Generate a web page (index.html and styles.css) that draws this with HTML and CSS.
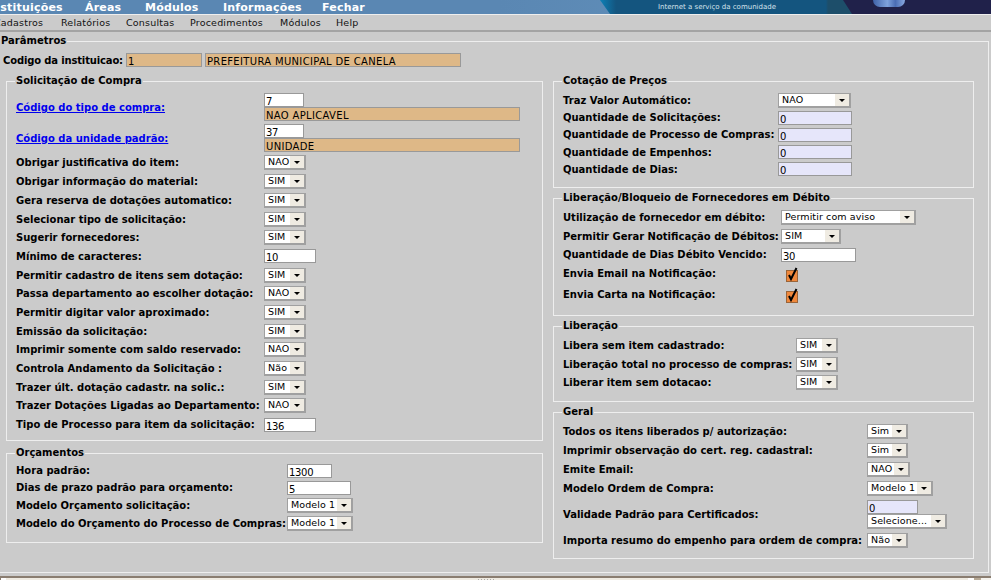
FILE: index.html
```html
<!DOCTYPE html>
<html lang="pt-BR">
<head>
<meta charset="UTF-8">
<title>Parâmetros</title>
<link rel="stylesheet" href="styles.css">
</head>
<body>

<div class="topbar">
    <div class="topmenu">
        <span>Instituições</span><span>Áreas</span><span>Módulos</span><span>Informações</span><span>Fechar</span>
    </div>
    <div class="banner">
        <div class="banner-tip"></div>
        <div class="banner-mid">
            <div class="banner-title">Prefeitura <em>On-line</em></div>
            <div class="banner-sub">Internet a serviço da comunidade</div>
        </div>
        <div class="banner-dark"><div class="banner-cube"></div></div>
    </div>
</div>
<div class="submenu">
    <span>Cadastros</span><span>Relatórios</span><span>Consultas</span><span>Procedimentos</span><span>Módulos</span><span>Help</span>
</div>

<fieldset class="main">
    <legend>Parâmetros</legend>
    <div class="inst">
        <span class="lbl">Codigo da instituicao:</span>
        <span class="inp ro num w76">1</span>
        <span class="inp ro w256">PREFEITURA MUNICIPAL DE CANELA</span>
    </div>

    <div class="cols">
        <div class="col-left">
            <fieldset class="box sol">
                <legend>Solicitação de Compra</legend>
                <div class="row tall"><a class="lbl link" href="#">Código do tipo de compra:</a><div class="stack"><span class="inp num w40">7</span><span class="inp ro w256">NAO APLICAVEL</span></div></div>
                <div class="row tall"><a class="lbl link" href="#">Código da unidade padrão:</a><div class="stack"><span class="inp num w40">37</span><span class="inp ro w256">UNIDADE</span></div></div>
                <div class="row"><span class="lbl">Obrigar justificativa do item:</span><span class="sel w42">NAO</span></div>
                <div class="row"><span class="lbl">Obrigar informação do material:</span><span class="sel w42">SIM</span></div>
                <div class="row"><span class="lbl">Gera reserva de dotações automatico:</span><span class="sel w42">SIM</span></div>
                <div class="row"><span class="lbl">Selecionar tipo de solicitação:</span><span class="sel w42">SIM</span></div>
                <div class="row"><span class="lbl">Sugerir fornecedores:</span><span class="sel w42">SIM</span></div>
                <div class="row"><span class="lbl">Mínimo de caracteres:</span><span class="inp num w52">10</span></div>
                <div class="row"><span class="lbl">Permitir cadastro de itens sem dotação:</span><span class="sel w42">SIM</span></div>
                <div class="row"><span class="lbl">Passa departamento ao escolher dotação:</span><span class="sel w42">NAO</span></div>
                <div class="row"><span class="lbl">Permitir digitar valor aproximado:</span><span class="sel w42">SIM</span></div>
                <div class="row"><span class="lbl">Emissão da solicitação:</span><span class="sel w42">SIM</span></div>
                <div class="row"><span class="lbl">Imprimir somente com saldo reservado:</span><span class="sel w42">NAO</span></div>
                <div class="row"><span class="lbl">Controla Andamento da Solicitação :</span><span class="sel w42">Não</span></div>
                <div class="row"><span class="lbl">Trazer últ. dotação cadastr. na solic.:</span><span class="sel w42">SIM</span></div>
                <div class="row"><span class="lbl">Trazer Dotações Ligadas ao Departamento:</span><span class="sel w42">NAO</span></div>
                <div class="row"><span class="lbl">Tipo de Processo para item da solicitação:</span><span class="inp num w52">136</span></div>
            </fieldset>

            <fieldset class="box orc">
                <legend>Orçamentos</legend>
                <div class="row r17"><span class="lbl">Hora padrão:</span><span class="inp num w45">1300</span></div>
                <div class="row r17"><span class="lbl">Dias de prazo padrão para orçamento:</span><span class="inp num w64">5</span></div>
                <div class="row r18"><span class="lbl">Modelo Orçamento solicitação:</span><span class="sel w66">Modelo 1</span></div>
                <div class="row r18"><span class="lbl">Modelo do Orçamento do Processo de Compras:</span><span class="sel w66">Modelo 1</span></div>
            </fieldset>
        </div>

        <div class="col-right">
            <fieldset class="box cot">
                <legend>Cotação de Preços</legend>
                <div class="row r17"><span class="lbl">Traz Valor Automático:</span><span class="sel w73">NAO</span></div>
                <div class="row r17"><span class="lbl">Quantidade de Solicitações:</span><span class="inp dis num w74">0</span></div>
                <div class="row r17"><span class="lbl">Quantidade de Processo de Compras:</span><span class="inp dis num w74">0</span></div>
                <div class="row r17"><span class="lbl">Quantidade de Empenhos:</span><span class="inp dis num w74">0</span></div>
                <div class="row r17"><span class="lbl">Quantidade de Dias:</span><span class="inp dis num w74">0</span></div>
            </fieldset>

            <fieldset class="box lib">
                <legend>Liberação/Bloqueio de Fornecedores em Débito</legend>
                <div class="row"><span class="lbl">Utilização de fornecedor em débito:</span><span class="sel w135">Permitir com aviso</span></div>
                <div class="row"><span class="lbl">Permitir Gerar Notificação de Débitos:</span><span class="sel w60">SIM</span></div>
                <div class="row"><span class="lbl">Quantidade de Dias Débito Vencido:</span><span class="inp num w75">30</span></div>
                <div class="row r19"><span class="lbl">Envia Email na Notificação:</span><svg class="chk" width="14" height="15" viewBox="0 0 14 15"><rect x="1.5" y="3.5" width="11" height="11" fill="#f0883c" stroke="#9a6438"/><path d="M4 8 L6 12 L11.5 1" fill="none" stroke="#000" stroke-width="2"/></svg></div>
                <div class="row r23"><span class="lbl">Envia Carta na Notificação:</span><svg class="chk" width="14" height="15" viewBox="0 0 14 15"><rect x="1.5" y="3.5" width="11" height="11" fill="#f0883c" stroke="#9a6438"/><path d="M4 8 L6 12 L11.5 1" fill="none" stroke="#000" stroke-width="2"/></svg></div>
            </fieldset>

            <fieldset class="box lib2">
                <legend>Liberação</legend>
                <div class="row"><span class="lbl">Libera sem item cadastrado:</span><span class="sel w42">SIM</span></div>
                <div class="row"><span class="lbl">Liberação total no processo de compras:</span><span class="sel w42">SIM</span></div>
                <div class="row"><span class="lbl">Liberar item sem dotacao:</span><span class="sel w42">SIM</span></div>
            </fieldset>

            <fieldset class="box ger">
                <legend>Geral</legend>
                <div class="row r19"><span class="lbl">Todos os itens liberados p/ autorização:</span><span class="sel w41">Sim</span></div>
                <div class="row r19"><span class="lbl">Imprimir observação do cert. reg. cadastral:</span><span class="sel w41">Sim</span></div>
                <div class="row r19"><span class="lbl">Emite Email:</span><span class="sel w43">NAO</span></div>
                <div class="row r19"><span class="lbl">Modelo Ordem de Compra:</span><span class="sel w66">Modelo 1</span></div>
                <div class="row r33"><span class="lbl">Validade Padrão para Certificados:</span><div class="stack"><span class="inp dis num w51">0</span><span class="sel w80">Selecione...</span></div></div>
                <div class="row r19"><span class="lbl">Importa resumo do empenho para ordem de compra:</span><span class="sel w41">Não</span></div>
            </fieldset>
        </div>
    </div>
</fieldset>

<div class="statusbar">
    <div class="status-left"></div>
    <div class="status-mid"><div class="status-dots"></div></div>
    <div class="status-gap"></div>
    <div class="status-thumb"></div>
    <div class="status-right"></div>
</div>

</body>
</html>
```

FILE: styles.css
```css
html, body {
    margin: 0;
    padding: 0;
    height: 580px;
    overflow: hidden;
}
body {
    background-color: #cbcbcb;
    font-family: "DejaVu Sans", Verdana, sans-serif;
    font-size: 10px;
    color: #000;
}

/* top menus */
.topbar {
    height: 14px;
    background-color: #5a87b3;
    position: relative;
    overflow: hidden;
    border-bottom: 1px solid #eee;
}
.topmenu {
    display: flex;
    margin-left: -12px;
    padding-top: 1px;
    font-weight: bold;
    font-size: 11px;
    letter-spacing: 0.2px;
    line-height: 14px;
    color: #fff;
}
.topmenu span:nth-child(1) { width: 97px; }
.topmenu span:nth-child(2) { width: 60px; }
.topmenu span:nth-child(3) { width: 78px; }
.topmenu span:nth-child(4) { width: 99px; }
.topmenu span:nth-child(5) { width: 60px; }
.banner {
    position: absolute;
    top: 0;
    right: 0;
    bottom: 0;
    left: 500px;
    display: flex;
    background: linear-gradient(to right, #5a87b3, #6a9ac2);
}
.banner-tip {
    width: 100px;
}
.banner-mid {
    width: 252px;
    background: linear-gradient(to right, #0e80b6 0, #14557f 16px, #14557f 226px, #1d4e6a 228px);
    clip-path: polygon(0 0, 243px 0, 252px 100%, 10px 100%);
    color: #d5e3ec;
    position: relative;
    z-index: 1;
}
.banner-title {
    position: absolute;
    left: 53px;
    top: -12px;
    font-size: 14px;
    font-weight: bold;
    line-height: 14px;
    color: #fff;
    white-space: nowrap;
}
.banner-title em {
    font-style: normal;
    color: #e6d84a;
}
.banner-sub {
    position: absolute;
    left: 58px;
    top: 3px;
    font-size: 7px;
    line-height: 8px;
    white-space: nowrap;
}
.banner-dark {
    flex: 1;
    background-color: #20214a;
    margin-left: -12px;
    position: relative;
}
.banner-cube {
    position: absolute;
    left: 33px;
    top: 0;
    width: 32px;
    height: 7px;
    border-radius: 0 0 8px 8px;
    background: linear-gradient(to right, #3f62a8, #7fa2dc 45%, #4a6cb4 70%, #8aaae0);
}

.submenu {
    height: 15px;
    border-bottom: 2px solid #a3a3a3;
    display: flex;
    margin-left: -6px;
    font-size: 9.5px;
    letter-spacing: 0.2px;
    line-height: 15px;
    color: #111;
}
.submenu span:nth-child(1) { width: 67px; }
.submenu span:nth-child(2) { width: 65px; }
.submenu span:nth-child(3) { width: 64px; }
.submenu span:nth-child(4) { width: 90px; }
.submenu span:nth-child(5) { width: 56px; }

/* fieldsets */
fieldset {
    margin: 0;
    padding: 0;
    border: 1px solid #eeeeee;
    min-width: 0;
}
legend {
    font-weight: bold;
    font-size: 10px;
    line-height: 14px;
    padding: 0 1px;
}
.main {
    margin: 2px 2px 0 0;
    height: 539px;
    box-sizing: border-box;
    border-left: 0;
}
.inst {
    display: flex;
    align-items: center;
    height: 14px;
    margin-top: 5px;
    padding-left: 3px;
}
.inst .lbl { width: 123px; letter-spacing: -0.15px; }
.inst .w76 { margin-right: 3px; }

.cols {
    display: flex;
    margin-top: 7px;
    padding-left: 6px;
}
.col-left { width: 537px; margin-right: 10px; }
.col-right { width: 421px; }

.box {
    box-sizing: border-box;
    padding-left: 9px;
}
.box legend { margin-left: -1px; }
.sol { height: 367px; padding-top: 4px; }
.orc { height: 97px; margin-top: 5px; padding-top: 2px; }
.cot { height: 114px; padding-top: 4px; }
.lib { height: 125px; margin-top: 3px; padding-top: 3px; }
.lib2 { height: 83px; margin-top: 3px; padding-top: 3px; }
.ger { height: 154px; margin-top: 3px; padding-top: 3px; }

.row {
    display: flex;
    align-items: center;
    height: 18.7px;
}
.row.tall { height: 30.8px; }
.row.r17 { height: 17.2px; }
.row.r18 { height: 18px; }
.row.r19 { height: 19px; }
.row.r23 { height: 23px; }
.row.r33 { height: 33px; }
.lbl {
    font-weight: bold;
    white-space: nowrap;
    flex-shrink: 0;
}
.link {
    color: #0000ee;
    text-decoration: underline;
}
.sol .lbl { width: 248px; }
.orc .lbl { width: 271px; }
.cot .lbl { width: 215px; }
.lib .lbl { width: 218px; }
.lib2 .lbl { width: 233px; }
.ger .lbl { width: 304px; }

.stack {
    display: flex;
    flex-direction: column;
}

/* form controls */
.inp {
    display: block;
    box-sizing: border-box;
    height: 14px;
    border: 1px solid #999;
    background-color: #fff;
    font-size: 10px;
    letter-spacing: 0.33px;
    line-height: 15px;
    padding-left: 1px;
    white-space: nowrap;
    overflow: hidden;
}
.inp.num { letter-spacing: -0.3px; }
.ro { background-color: #deb887; }
.dis { background-color: #e6e6fa; }
.sel {
    position: relative;
    display: block;
    box-sizing: border-box;
    height: 15px;
    background-color: #fff;
    border-style: solid;
    border-color: #a0a0a0;
    border-width: 1px 2px 2px 1px;
    font-size: 9.5px;
    letter-spacing: 0.1px;
    line-height: 12px;
    padding-left: 3px;
    white-space: nowrap;
}
.sel::after {
    content: "";
    position: absolute;
    top: 0;
    right: 0;
    bottom: 0;
    width: 14px;
    background-color: #efebe2;
}
.sel::before {
    content: "";
    position: absolute;
    right: 4px;
    top: 5px;
    z-index: 1;
    border-left: 3px solid transparent;
    border-right: 3px solid transparent;
    border-top: 3px solid #000;
}
.chk {
    margin: 2px 0 0 4px;
    display: block;
}

.w40 { width: 40px; }
.w41 { width: 41px; }
.w42 { width: 42px; }
.w43 { width: 43px; }
.w45 { width: 45px; }
.w51 { width: 51px; }
.w52 { width: 52px; }
.w60 { width: 60px; }
.w64 { width: 64px; }
.w66 { width: 66px; }
.w73 { width: 73px; }
.w74 { width: 74px; }
.w75 { width: 75px; }
.w76 { width: 76px; }
.w80 { width: 80px; }
.w135 { width: 135px; }
.w256 { width: 256px; }

/* status bar */
.statusbar {
    margin-top: 3px;
    height: 3px;
    background-color: #efebe2;
    border-top: 2px solid #8a7d70;
    display: flex;
}
.status-left {
    width: 6px;
    box-sizing: border-box;
    border-left: 1px solid #8a7d70;
    background-color: #fff;
}
.status-mid {
    flex: 1;
    display: flex;
    justify-content: center;
    align-items: flex-end;
}
.status-dots {
    width: 18px;
    height: 2px;
    background: repeating-linear-gradient(to right, #aaa 0, #aaa 1px, transparent 1px, transparent 3px);
}
.status-gap {
    width: 6px;
    background-color: #fff;
}
.status-thumb {
    width: 7px;
    background-color: #b8ab98;
}
.status-right {
    width: 10px;
    background-color: #f5f3ee;
}
```
